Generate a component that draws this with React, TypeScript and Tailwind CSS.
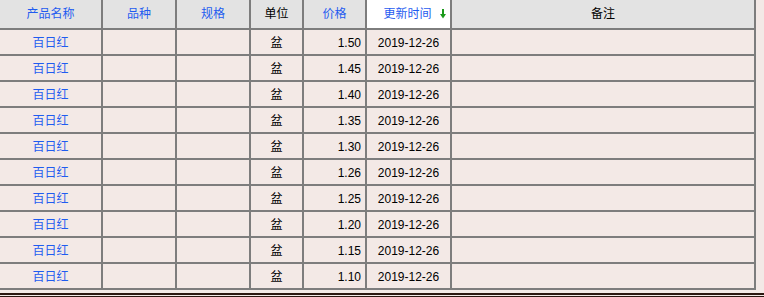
const rows = [
  { price: '1.50' },
  { price: '1.45' },
  { price: '1.40' },
  { price: '1.35' },
  { price: '1.30' },
  { price: '1.26' },
  { price: '1.25' },
  { price: '1.20' },
  { price: '1.15' },
  { price: '1.10' },
];

const cell = 'flex items-center border-r-2 border-b-2 border-[#7d7d7d]';
const bodyCell = `${cell} pt-px`;

function SortArrow() {
  return (
    <svg width="6" height="10" viewBox="0 0 6 10" className="absolute right-[4px] top-[9px]">
      <path d="M3 0 V8" stroke="#1a9a1a" strokeWidth="2" />
      <path d="M0 5 L3 9.5 L6 5 Z" fill="#1a9a1a" />
    </svg>
  );
}

export default function App() {
  return (
    <div className="min-h-[297px] w-[764px] bg-[#f3e9e6] font-['Liberation_Sans','Noto_Sans_CJK_SC',sans-serif] text-[12px] text-black">
      <div className="grid w-[756px] grid-cols-[103px_74px_74px_53px_63px_85px_304px]">
        {/* header */}
        <div className={`${cell} h-[30px] justify-center bg-[#e3e3e3] text-[#1f5cf0]`}>产品名称</div>
        <div className={`${cell} justify-center bg-[#e3e3e3] text-[#1f5cf0]`}>品种</div>
        <div className={`${cell} justify-center bg-[#e3e3e3] text-[#1f5cf0]`}>规格</div>
        <div className={`${cell} justify-center bg-[#e3e3e3]`}>单位</div>
        <div className={`${cell} justify-center bg-[#e3e3e3] text-[#1f5cf0]`}>价格</div>
        <div className={`${cell} relative justify-center bg-white pr-[2px] text-[#1f5cf0]`}>
          更新时间
          <SortArrow />
        </div>
        <div className={`${cell} justify-center bg-[#e3e3e3]`}>备注</div>

        {rows.map((r, i) => (
          <div key={i} className="contents">
            <div className={`${bodyCell} h-[26px] justify-center text-[#1f5cf0]`}>百日红</div>
            <div className={bodyCell} />
            <div className={bodyCell} />
            <div className={`${bodyCell} justify-center`}>盆</div>
            <div className={`${bodyCell} justify-end pr-[4px]`}>{r.price}</div>
            <div className={`${bodyCell} justify-center`}>2019-12-26</div>
            <div className={bodyCell} />
          </div>
        ))}
      </div>
      <div className="mt-[3px] h-[5px] border-t-2 border-b-2 border-[#2b1710] bg-[#f3e9e6]" />
    </div>
  );
}
